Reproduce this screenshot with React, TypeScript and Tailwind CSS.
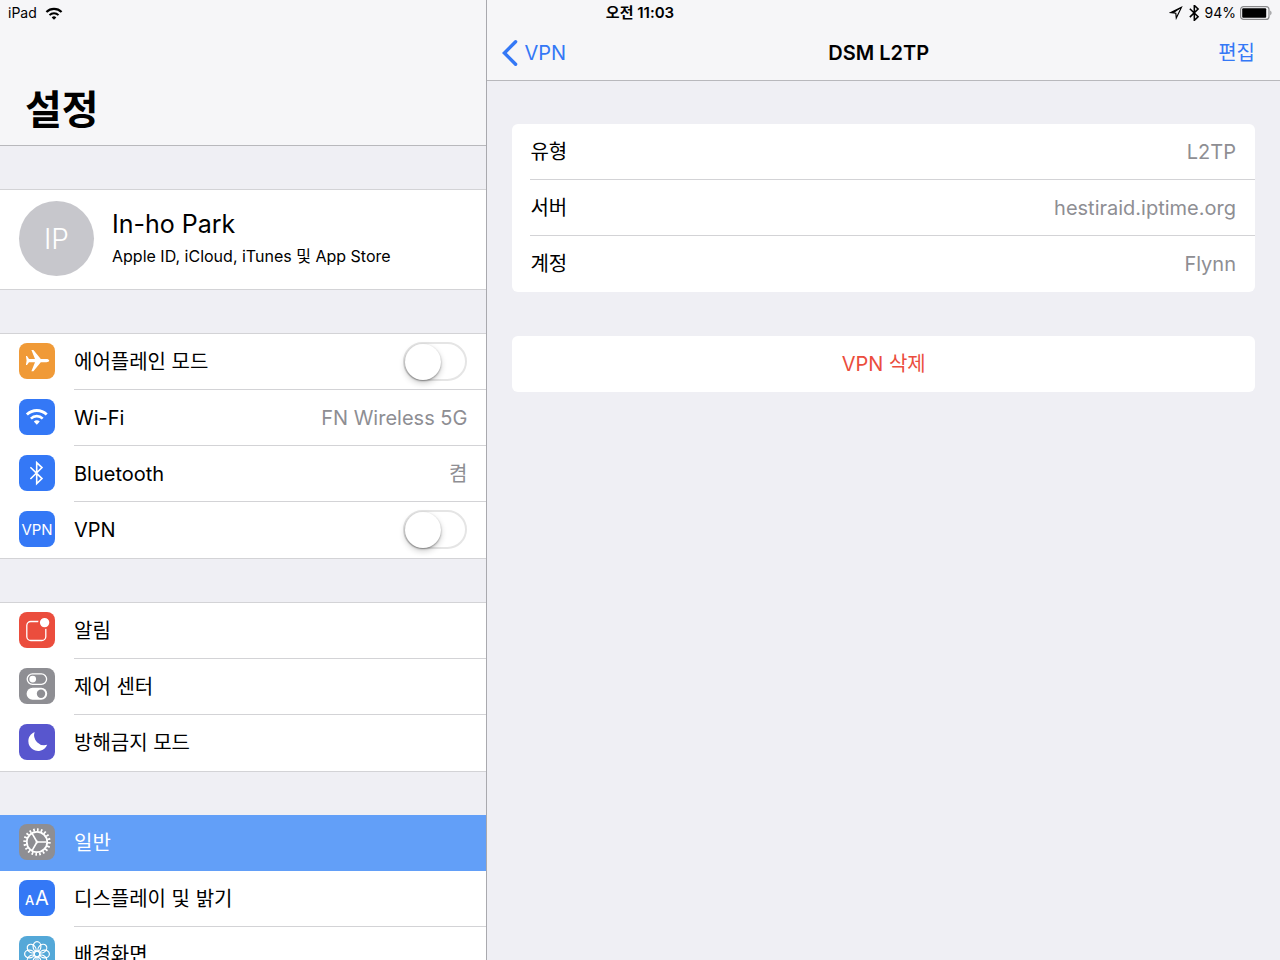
import React, { useState } from "react";

const Wifi = () => (
  <>
    <path d="M7.9 15.6A14 14 0 0 1 27.7 15.6" fill="none" stroke="currentColor" strokeWidth="2.8" />
    <path d="M11.9 19.6A8.3 8.3 0 0 1 23.7 19.6" fill="none" stroke="currentColor" strokeWidth="2.6" />
    <path d="M17.8 25.8L14.8 22.6A4.3 4.3 0 0 1 20.8 22.6Z" fill="currentColor" />
  </>
);

const Bluetooth = ({ width = 1.6 }: { width?: number }) => (
  <path
    d="M11.4 12.2L23 23.6L17.7 28.6V7.6L23 12.6L11.4 24"
    fill="none"
    stroke="currentColor"
    strokeWidth={width}
  />
);

const glyphs: Record<string, React.ReactNode> = {
  airplane: (
    <path
      d="M30.2 17.6c0 1-1.4 1.7-2.8 1.7h-5.6l-7.4 8.9h-2l3.6-8.9h-6l-2 2.8H6.9l.7-4.5-.7-4.5H8l2 2.8h6l-3.6-8.9h2l7.4 8.9h5.6c1.4 0 2.8.7 2.8 1.7z"
      fill="currentColor"
    />
  ),
  wifi: <Wifi />,
  bluetooth: <Bluetooth />,
  vpn: (
    <text x="18" y="23.5" textAnchor="middle" fontSize="15" fill="currentColor">
      VPN
    </text>
  ),
  notifications: (
    <>
      <rect x="7.8" y="9.5" width="19" height="19" rx="4" fill="none" stroke="currentColor" strokeWidth="1.3" />
      <circle cx="25.6" cy="10.6" r="5.6" fill="currentColor" stroke="#eb4d3d" strokeWidth="1.8" />
    </>
  ),
  control: (
    <>
      <rect x="8.2" y="5.9" width="19.4" height="10.4" rx="5.2" fill="none" stroke="currentColor" strokeWidth="1.3" />
      <circle cx="13.7" cy="11.1" r="3.4" fill="currentColor" />
      <rect x="7.6" y="19.7" width="20.6" height="12" rx="6" fill="currentColor" />
      <circle cx="22" cy="25.7" r="4.2" fill="#8e8e93" />
    </>
  ),
  moon: <path d="M15.6 8A9.8 9.8 0 1 0 28.2 20.8A10.2 10.2 0 0 1 15.6 8Z" fill="currentColor" />,
  gear: (
    <g fill="none" stroke="currentColor">
      <circle cx="18" cy="18" r="12.2" strokeWidth="3" pathLength="60" strokeDasharray="1.3 1.7" />
      <circle cx="18" cy="18" r="10.2" strokeWidth="1.8" />
      <path d="M18 18H27.6M18 18L13.2 9.7M18 18L13.2 26.3" strokeWidth="1.6" />
      <circle cx="18" cy="18" r="1" strokeWidth="1" />
    </g>
  ),
  display: (
    <g fill="currentColor">
      <text x="6" y="24.5" fontSize="13" fontWeight="500">A</text>
      <text x="16" y="24.5" fontSize="20">A</text>
    </g>
  ),
  flower: (
    <g fill="none" stroke="currentColor" strokeWidth="1.2">
      <circle cx="18" cy="18" r="2.8" />
      {[0, 45, 90, 135, 180, 225, 270, 315].map((a) => (
        <ellipse key={a} cx="18" cy="10.4" rx="3.9" ry="4.8" transform={`rotate(${a} 18 18)`} />
      ))}
    </g>
  ),
};

interface Item {
  id: string;
  label: string;
  color: string;
  value?: string;
  toggle?: boolean;
}

const groups: Item[][] = [
  [
    { id: "airplane", label: "에어플레인 모드", color: "bg-[#f09a37]", toggle: true },
    { id: "wifi", label: "Wi-Fi", color: "bg-[#3478f6]", value: "FN Wireless 5G" },
    { id: "bluetooth", label: "Bluetooth", color: "bg-[#3478f6]", value: "켬" },
    { id: "vpn", label: "VPN", color: "bg-[#3478f6]", toggle: true },
  ],
  [
    { id: "notifications", label: "알림", color: "bg-[#eb4d3d]" },
    { id: "control", label: "제어 센터", color: "bg-[#8e8e93]" },
    { id: "moon", label: "방해금지 모드", color: "bg-[#5856ce]" },
  ],
  [
    { id: "gear", label: "일반", color: "bg-[#8e8e93]" },
    { id: "display", label: "디스플레이 및 밝기", color: "bg-[#3478f6]" },
    { id: "flower", label: "배경화면", color: "bg-[#54a8d8]" },
  ],
];

const details = [
  { label: "유형", value: "L2TP" },
  { label: "서버", value: "hestiraid.iptime.org" },
  { label: "계정", value: "Flynn" },
];

function SettingsRow({ item, selected, last, onSelect }: { item: Item; selected: boolean; last: boolean; onSelect: () => void }) {
  const [on, setOn] = useState(false);

  const content = (
    <>
      <svg viewBox="0 0 36 36" className={`mt-[9px] size-9 shrink-0 rounded-lg text-white ${item.color}`} aria-hidden="true">
        {glyphs[item.id]}
      </svg>
      <span
        className={`flex h-14 flex-1 items-center justify-between border-b pr-[19px] ${
          last || selected ? "border-transparent" : "border-[#d3d3d6]"
        }`}
      >
        <span>{item.label}</span>
        {item.value && <span className="text-[#8e8e93]">{item.value}</span>}
        {item.toggle && (
          <input
            type="checkbox"
            role="switch"
            checked={on}
            onChange={(e) => setOn(e.target.checked)}
            className="flex h-[39px] w-16 appearance-none items-center rounded-full border-2 border-[#e5e5e5] bg-white transition-colors before:size-9 before:rounded-full before:bg-white before:shadow-[0_3px_6px_rgba(0,0,0,0.2),0_1px_2px_rgba(0,0,0,0.35)] before:transition-transform checked:border-[#4cd964] checked:bg-[#4cd964] checked:before:translate-x-6"
          />
        )}
      </span>
    </>
  );

  const rowClass = `flex items-start gap-[19px] pl-[19px] text-xl ${selected ? "bg-[#629ff8] text-white" : "bg-white"}`;

  if (item.toggle) return <label className={rowClass}>{content}</label>;
  return (
    <a
      href={`#${item.id}`}
      aria-current={selected ? "page" : undefined}
      className={rowClass}
      onClick={(e) => {
        e.preventDefault();
        onSelect();
      }}
    >
      {content}
    </a>
  );
}

function StatusBar() {
  return (
    <div className="absolute inset-x-0 top-0 z-10 grid h-[26px] grid-cols-3 items-center px-2 text-sm">
      <div className="flex items-center gap-2">
        <span>iPad</span>
        <svg viewBox="6.5 9 22.6 17" className="h-[13px] w-[18px]" aria-hidden="true">
          <Wifi />
        </svg>
      </div>
      <div className="text-center text-[15px] font-semibold">오전 11:03</div>
      <div className="flex items-center justify-end gap-1">
        <svg viewBox="0 0 14 14" className="size-[14px]" aria-hidden="true">
          <path d="M12.4 1.4L1.8 6.6L6.8 7.2L7.3 12Z" fill="none" stroke="currentColor" strokeWidth="1.2" />
          <path d="M12.4 1.4L1.8 6.6L5 7Z" fill="currentColor" />
        </svg>
        <svg viewBox="10 7 14.5 22.5" className="h-4 w-[14px]" aria-hidden="true">
          <Bluetooth width={2.2} />
        </svg>
        <span>94%</span>
        <svg viewBox="0 0 32 14" className="h-[14px] w-8" aria-hidden="true">
          <rect x="0.6" y="0.6" width="28.4" height="12.8" rx="3" fill="none" stroke="#8a8a8c" strokeWidth="1.2" />
          <rect x="2.2" y="2.2" width="24" height="9.6" rx="1" fill="currentColor" />
          <path d="M30.3 4.6c1.6.8 1.6 4 0 4.8z" fill="#8a8a8c" />
        </svg>
      </div>
    </div>
  );
}

export default function App() {
  const [selected, setSelected] = useState("gear");

  return (
    <div className="relative flex h-screen overflow-hidden bg-[#efeff4] font-[Inter,'Noto_Sans_CJK_KR',sans-serif] text-black">
      <StatusBar />

      {/* Settings list */}
      <aside className="flex w-[38%] shrink-0 flex-col">
        <header className="shrink-0 border-b border-[#b8b8bc] bg-[#f6f6f8] px-[25px] pt-[86px] pb-[11px]">
          <h1 className="text-[40px] leading-[48px] font-bold">설정</h1>
        </header>

        <nav className="flex flex-1 flex-col gap-[43px] overflow-y-auto pt-[43px] [scrollbar-width:none]">
          <a
            href="#account"
            className="flex items-center gap-[18px] border-y border-[#d3d3d6] bg-white px-[19px] pt-[11px] pb-[13px]"
          >
            <span className="flex size-[75px] items-center justify-center rounded-full bg-[#c7c7cc] text-[28px] font-light text-white">
              IP
            </span>
            <span className="flex flex-col gap-1 pb-0.5">
              <span className="text-[25px] leading-8">In-ho Park</span>
              <span className="text-base leading-6">Apple ID, iCloud, iTunes 및 App Store</span>
            </span>
          </a>

          {groups.map((group) => (
            <div
              key={group[0].id}
              className={`shrink-0 border-[#d3d3d6] ${group[0].id === selected ? "border-b" : "border-y"}`}
            >
              {group.map((item, i) => (
                <SettingsRow
                  key={item.id}
                  item={item}
                  selected={item.id === selected}
                  last={i === group.length - 1}
                  onSelect={() => setSelected(item.id)}
                />
              ))}
            </div>
          ))}
        </nav>
      </aside>

      {/* VPN configuration */}
      <main className="flex flex-1 flex-col border-l border-[#a9a9ae]">
        <header className="grid h-[81px] shrink-0 grid-cols-[1fr_auto_1fr] items-center border-b border-[#b8b8bc] bg-[#f6f6f8] pt-[26px] pr-[25px] pl-[15px] text-xl">
          <a href="#vpn" className="flex items-center gap-1.5 text-[#3478f6]">
            <svg viewBox="0 0 16 26" className="h-[26px] w-4" aria-hidden="true">
              <path d="M13.6 1.8L2.4 13L13.6 24.2" fill="none" stroke="currentColor" strokeWidth="3.4" strokeLinecap="round" />
            </svg>
            VPN
          </a>
          <h2 className="font-semibold">DSM L2TP</h2>
          <button type="button" className="justify-self-end text-[#3478f6]">
            편집
          </button>
        </header>

        <div className="flex flex-col gap-11 px-[25px] pt-[43px] text-xl">
          <dl className="rounded-md bg-white pl-[18px]">
            {details.map((row) => (
              <div
                key={row.label}
                className="flex h-14 items-center justify-between border-b border-[#d3d3d6] pr-[19px] last:border-transparent"
              >
                <dt>{row.label}</dt>
                <dd className="text-[#8e8e93]">{row.value}</dd>
              </div>
            ))}
          </dl>
          <button type="button" className="h-14 rounded-md bg-white text-[#eb4d3d]">
            VPN 삭제
          </button>
        </div>
      </main>
    </div>
  );
}
